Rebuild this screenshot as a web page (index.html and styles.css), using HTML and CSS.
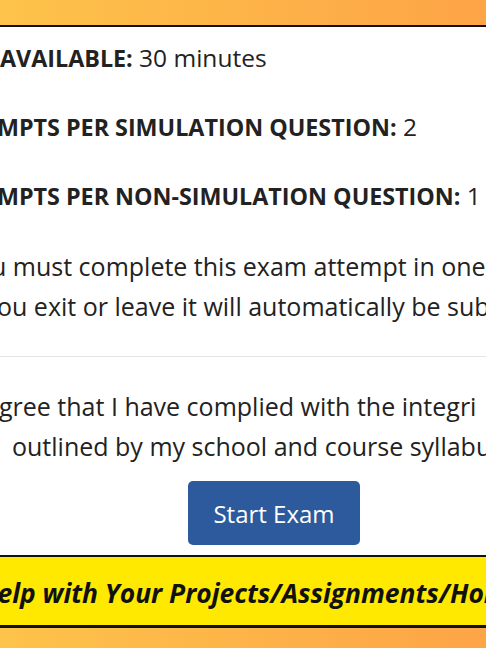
FILE: index.html
```html
<!DOCTYPE html>
<html lang="en">
<head>
  <meta charset="utf-8">
  <meta name="viewport" content="width=device-width, initial-scale=1">
  <title>Start Exam</title>
  <link rel="stylesheet" href="styles.css">
</head>
<body>
  <div class="panel">
    <div class="info">
      <p class="stat stat-time"><b>AVAILABLE:</b> 30 minutes</p>
      <p class="stat stat-sim"><b>MPTS PER SIMULATION QUESTION:</b> 2</p>
      <p class="stat stat-nonsim"><b>MPTS PER NON-SIMULATION QUESTION:</b> 1</p>
    </div>
    <p class="note"><span class="line l1">u must complete this exam attempt in one</span><span class="line l2">ou exit or leave it will automatically be sub</span></p>
    <hr class="rule">
    <p class="note agree"><span class="line l3">gree that I have complied with the integri</span><span class="line l4">outlined by my school and course syllabu</span></p>
    <div class="actions">
      <button class="start-btn">Start Exam</button>
    </div>
  </div>
  <div class="banner">
    <span class="banner-text">Help with Your Projects/Assignments/Homework</span>
  </div>
</body>
</html>
```

FILE: styles.css
```css
body {
  margin: 0;
  height: 648px;
  overflow: hidden;
  background: linear-gradient(to right, #fdc34a, #fda447);
  font-family: "Open Sans", "Noto Sans", sans-serif;
  color: #222;
}
.panel {
  margin-top: 25px;
  height: 528px;
  background: #fff;
  border-top: 2px solid #111;
  border-bottom: 2px solid #111;
  overflow: hidden;
}
.info {
  padding-top: 12px;
}
.stat {
  margin: 0 0 31px 0;
  font-size: 24.5px;
  line-height: 38px;
  white-space: nowrap;
}
.stat b {
  font-size: 23.3px;
  font-weight: 700;
}
.stat-sim, .stat-nonsim {
  margin-left: -3px;
}
.note {
  margin: 0;
  font-size: 25px;
  line-height: 40px;
  white-space: nowrap;
}
.line {
  display: block;
}
.l1 { margin-left: -9px; }
.l2 { margin-left: -3px; }
.l3 { margin-left: -1px; }
.l4 { margin-left: 12px; }
.rule {
  border: 0;
  border-top: 1px solid #e3e3e3;
  margin: 30px 0 29px 0;
}
.actions {
  display: flex;
  justify-content: center;
  padding-top: 15px;
  padding-left: 62px;
}
.start-btn {
  width: 172px;
  height: 64px;
  border: 0;
  border-radius: 5px;
  background: #2d5a9c;
  color: #fff;
  font-family: "Open Sans", "Noto Sans", sans-serif;
  font-size: 24px;
}
.banner {
  height: 68px;
  background: #ffe900;
  border-bottom: 3px solid #111;
  display: flex;
  align-items: center;
  white-space: nowrap;
  overflow: hidden;
}
.banner-text {
  margin-left: -21px;
  padding-top: 4px;
  font-family: "Open Sans", sans-serif;
  font-weight: 700;
  font-style: italic;
  font-size: 26.4px;
  color: #111;
}
```
